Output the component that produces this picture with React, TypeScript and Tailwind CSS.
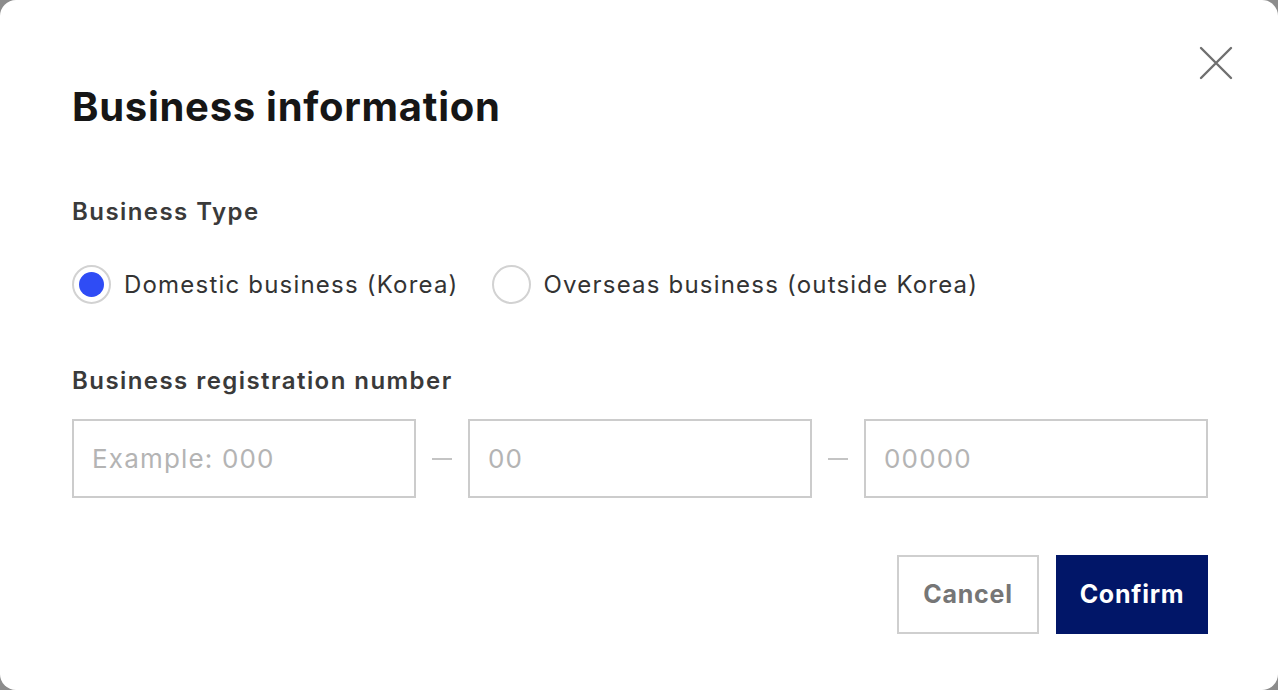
import { useState } from 'react';

type BusinessType = 'domestic' | 'overseas';

function Radio({
  checked,
  label,
  onSelect,
}: {
  checked: boolean;
  label: string;
  onSelect: () => void;
}) {
  return (
    <button type="button" onClick={onSelect} className="flex items-center gap-[13px]">
      <span className="flex h-[39px] w-[39px] items-center justify-center rounded-full border-2 border-[#d2d2d2] bg-white">
        {checked && <span className="h-[25px] w-[25px] rounded-full bg-[#2f4cf5]" />}
      </span>
      <span className="text-[24px] leading-8 tracking-[0.05em] text-[#333333]">{label}</span>
    </button>
  );
}

function NumberField({ placeholder }: { placeholder: string }) {
  return (
    <input
      type="text"
      placeholder={placeholder}
      className="h-[79px] w-[344px] border-2 border-[#cccccc] bg-white px-[18px] text-[26px] tracking-[0.045em] text-[#333333] outline-none placeholder:text-[#b4b4b4]"
    />
  );
}

function Dash() {
  return <span className="h-[2px] w-[20px] bg-[#c4c4c4]" />;
}

export default function App() {
  const [type, setType] = useState<BusinessType>('domestic');

  return (
    <div className="min-h-screen bg-[#8c8c8c] font-['Inter','Liberation_Sans',sans-serif]">
      <div className="relative flex h-[690px] w-full flex-col rounded-[16px] bg-white pl-[72px] pr-[70px] pt-[83px]">
        {/* close */}
        <button type="button" aria-label="Close" className="absolute right-[45px] top-[46px] h-[34px] w-[34px] text-[#6f6f6f]">
          <svg viewBox="0 0 34 34" className="h-full w-full" fill="none" stroke="currentColor" strokeWidth="2.4" strokeLinecap="round">
            <path d="M2 2 L32 32 M32 2 L2 32" />
          </svg>
        </button>

        <h1 className="text-[40px] font-bold leading-[48px] tracking-[0.018em] text-[#161616]">Business information</h1>

        <h2 className="mt-[65px] text-[24px] font-semibold leading-8 tracking-[0.06em] text-[#3a3a3a]">Business Type</h2>
        <div className="mt-[37px] flex items-center gap-[33px]">
          <Radio checked={type === 'domestic'} label="Domestic business (Korea)" onSelect={() => setType('domestic')} />
          <Radio checked={type === 'overseas'} label="Overseas business (outside Korea)" onSelect={() => setType('overseas')} />
        </div>

        <h2 className="mt-[61px] text-[24px] font-semibold leading-8 tracking-[0.06em] text-[#3a3a3a]">
          Business registration number
        </h2>
        <div className="mt-[22px] flex items-center gap-[16px]">
          <NumberField placeholder="Example: 000" />
          <Dash />
          <NumberField placeholder="00" />
          <Dash />
          <NumberField placeholder="00000" />
        </div>

        <div className="mt-[57px] flex justify-end gap-[17px]">
          <button
            type="button"
            className="h-[79px] w-[142px] border-2 border-[#cfcfcf] bg-white text-[25px] font-bold tracking-[0.03em] text-[#767676]"
          >
            Cancel
          </button>
          <button type="button" className="h-[79px] w-[152px] bg-[#011668] text-[25px] font-bold tracking-[0.03em] text-white">
            Confirm
          </button>
        </div>
      </div>
    </div>
  );
}
